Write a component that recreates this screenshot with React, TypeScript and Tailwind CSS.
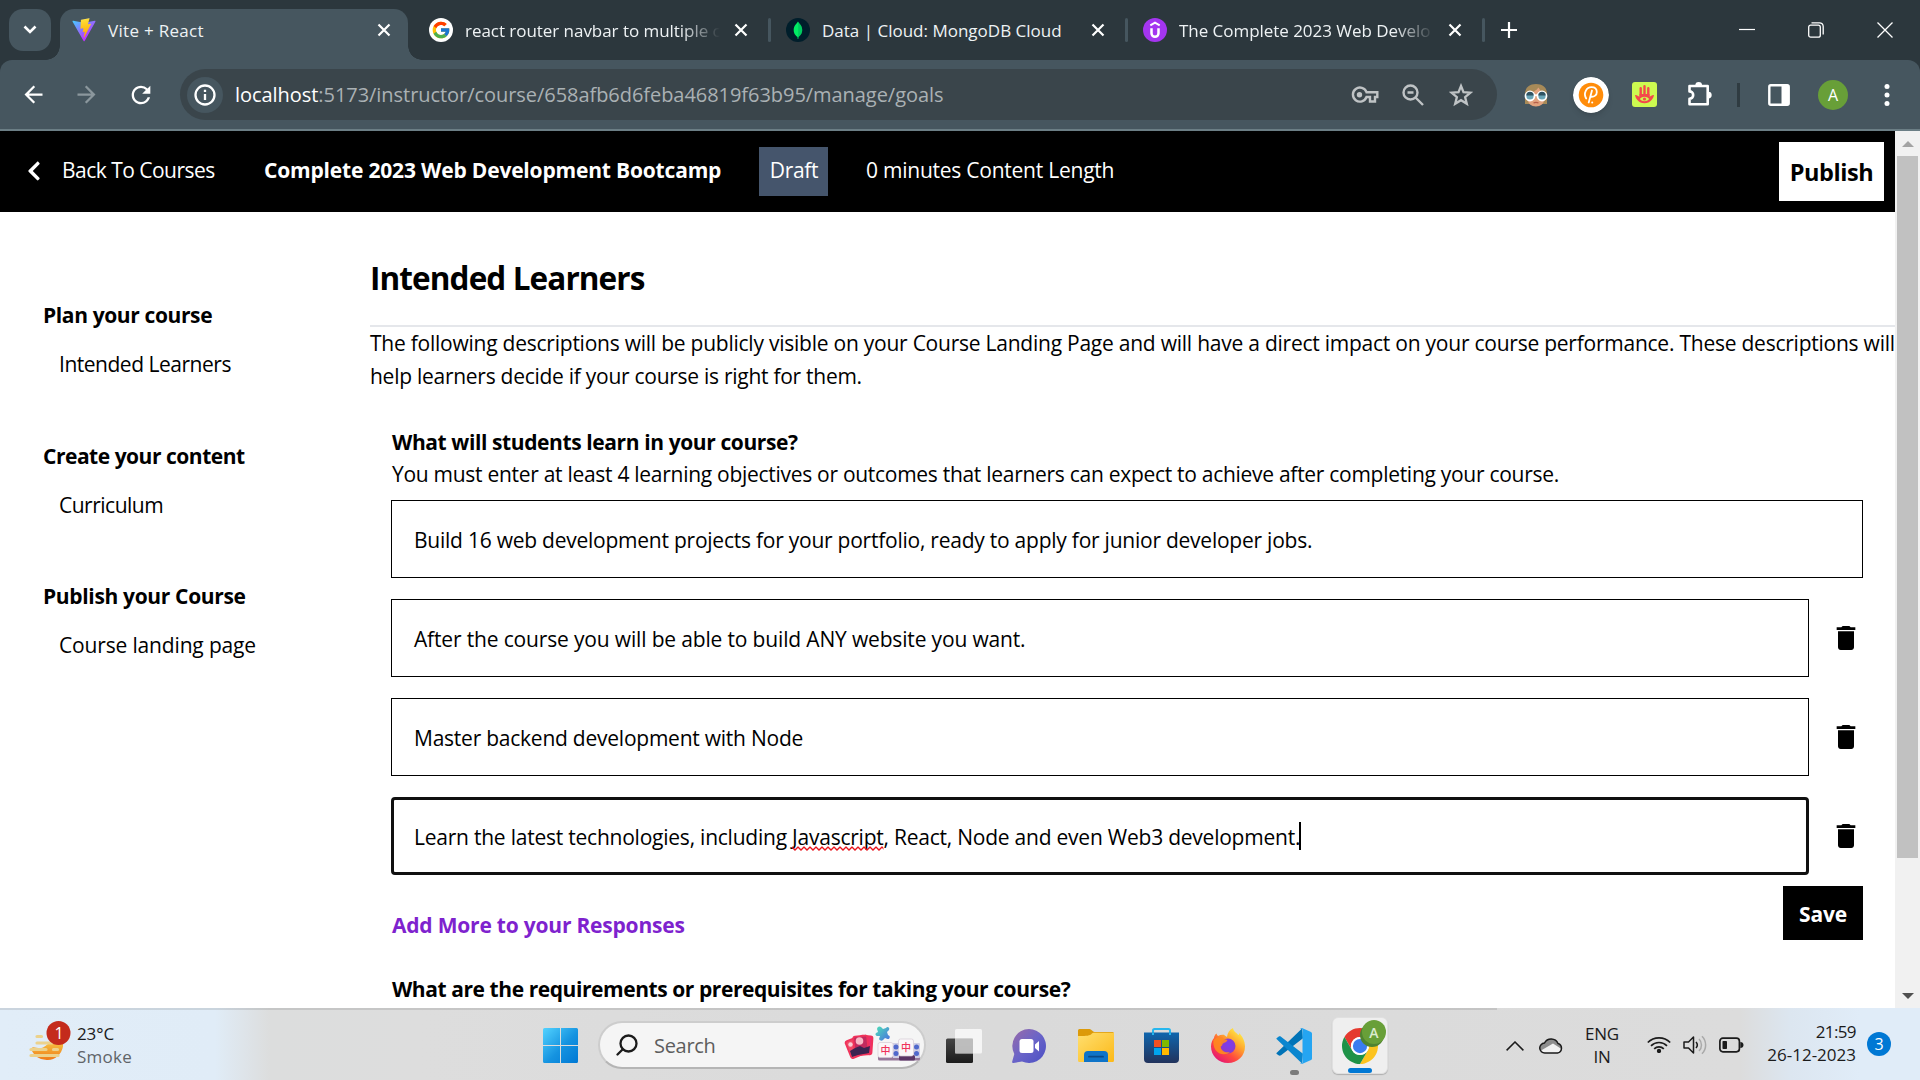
import type { ReactNode } from "react";
import { FaChevronLeft } from "react-icons/fa";
import { FcGoogle } from "react-icons/fc";
import { MdArrowBack, MdArrowForward, MdDelete, MdRefresh } from "react-icons/md";

/* ---------- favicons ---------- */

function ViteIcon() {
  return (
    <svg viewBox="0 0 410 404" className="h-6 w-6 shrink-0">
      <defs>
        <linearGradient id="viteA" x1="6" y1="33" x2="235" y2="344" gradientUnits="userSpaceOnUse">
          <stop stopColor="#41D1FF" />
          <stop offset="1" stopColor="#BD34FE" />
        </linearGradient>
        <linearGradient id="viteB" x1="194" y1="9" x2="236" y2="293" gradientUnits="userSpaceOnUse">
          <stop stopColor="#FFEA83" />
          <stop offset="0.08" stopColor="#FFDD35" />
          <stop offset="1" stopColor="#FFA800" />
        </linearGradient>
      </defs>
      <path fill="url(#viteA)" d="M399.641 59.5246L215.643 388.545C211.844 395.338 202.084 395.378 198.228 388.618L10.5817 59.5563C6.38087 52.1896 12.6802 43.2665 21.0281 44.7586L205.223 77.6824C206.398 77.8924 207.601 77.8904 208.776 77.6763L389.119 44.8058C397.439 43.2894 403.768 52.1434 399.641 59.5246Z" />
      <path fill="url(#viteB)" d="M292.965 1.5744L156.801 28.2552C154.563 28.6937 152.906 30.5903 152.771 32.8664L144.395 174.33C144.198 177.662 147.258 180.248 150.51 179.498L188.42 170.749C191.967 169.931 195.172 173.055 194.443 176.622L183.18 231.775C182.422 235.487 185.907 238.661 189.532 237.56L212.947 230.446C216.577 229.344 220.065 232.527 219.297 236.242L201.398 322.875C200.278 328.294 207.486 331.249 210.492 326.603L212.5 323.5L323.454 102.072C325.312 98.3645 322.108 94.137 318.036 94.9228L279.014 102.454C275.347 103.161 272.227 99.746 273.262 96.1583L298.731 7.86689C299.767 4.27314 296.636 0.855181 292.965 1.5744Z" />
    </svg>
  );
}

function GoogleIcon() {
  return (
    <span className="flex h-6 w-6 shrink-0 items-center justify-center rounded-full bg-white">
      <FcGoogle className="h-5 w-5" />
    </span>
  );
}

function MongoIcon() {
  return (
    <svg viewBox="0 0 24 24" className="h-6 w-6 shrink-0">
      <circle cx="12" cy="12" r="12" fill="#001e2b" />
      <path fill="#00ed64" d="M12 3.5C13 5.5 16.2 7.5 16.2 12c0 4-2.4 5.8-3.7 6.9L12.2 21h-.5l-.2-2.1C10 17.800 7.700 16 7.700 12 7.700 7.500 11 5.500 12 3.500Z" />
      <path fill="#00a35c" d="M12.200 4v17h.300l.200-2.200c1.200-1.100 3.500-2.800 3.500-6.800 0-4.400-3-6.300-4-8Z" opacity=".45" />
    </svg>
  );
}

function UdemyIcon() {
  return (
    <svg viewBox="0 0 24 24" className="h-6 w-6 shrink-0">
      <circle cx="12" cy="12" r="12" fill="#a435f0" />
      <path d="M7.300 7.300 12 4.700l4.700 2.600" fill="none" stroke="#fff" strokeWidth="2.100" />
      <path d="M8.500 10.300v5a3.500 3.500 0 0 0 7 0v-5" fill="none" stroke="#fff" strokeWidth="2.500" />
    </svg>
  );
}

/* ---------- browser chrome ---------- */

function CloseMark() {
  return (
    <svg viewBox="0 0 14 14" className="h-3.5 w-3.5 shrink-0" stroke="#fff" strokeWidth="2.200">
      <path d="M1.500 1.500l11 11M12.500 1.500l-11 11" />
    </svg>
  );
}

function BackgroundTab({ icon, title, faded }: { icon: ReactNode; title: string; faded?: boolean }) {
  return (
    <div className="flex h-full w-[357px] items-center pl-[15px]">
      {icon}
      <span
        className={
          faded
            ? "ml-3 w-[255px] whitespace-nowrap pt-[2px] tracking-[-0.040px] [mask-image:linear-gradient(to_right,#000_215px,transparent_255px)]"
            : "ml-3 w-[255px] whitespace-nowrap pt-[2px]"
        }
      >
        {title}
      </span>
      <span className="ml-[14px] flex">
        <CloseMark />
      </span>
      <span className="ml-[20px] h-6 w-[3px] rounded-full bg-[#46565f]" />
    </div>
  );
}

function TabStrip() {
  return (
    <div className="flex h-[60px] items-start bg-[#2c373d] text-[17px] text-[#eef2f4]">
      <button className="ml-[9px] mt-[9px] flex h-[42px] w-[42px] items-center justify-center rounded-[14px] bg-[#46565f]">
        <svg viewBox="0 0 14 10" className="h-2.5 w-3.5" fill="none" stroke="#fff" strokeWidth="2.600">
          <path d="M1.500 1.500 7 7l5.500-5.500" />
        </svg>
      </button>
      <div className="relative ml-[9px] mt-[9px] flex h-[51px] w-[348px] items-start rounded-t-[14px] bg-[#46565f] pl-3">
        <span className="absolute -left-[14px] bottom-0 h-[14px] w-[14px] bg-[radial-gradient(circle_at_0_0,transparent_13.500px,#46565f_14px)]" />
        <span className="absolute -right-[14px] bottom-0 h-[14px] w-[14px] bg-[radial-gradient(circle_at_100%_0,transparent_13.500px,#46565f_14px)]" />
        <div className="flex h-[42px] items-center">
          <ViteIcon />
          <span className="ml-3 w-[255px] pt-[2px] tracking-[0.300px]">Vite + React</span>
          <span className="ml-[14px] flex">
            <CloseMark />
          </span>
        </div>
      </div>
      <div className="ml-[6px] mt-[9px] flex h-[42px]">
        <BackgroundTab icon={<GoogleIcon />} title="react router navbar to multiple c" faded />
        <BackgroundTab icon={<MongoIcon />} title="Data | Cloud: MongoDB Cloud" />
        <BackgroundTab icon={<UdemyIcon />} title="The Complete 2023 Web Develo" faded />
      </div>
      <svg viewBox="0 0 16 16" className="ml-[16px] mt-[22px] h-4 w-4" stroke="#fff" strokeWidth="2.200">
        <path d="M8 0v16M0 8h16" />
      </svg>
      <div className="ml-auto mt-[22px] flex items-center pr-[27px]">
        <svg viewBox="0 0 16 16" className="h-4 w-4" stroke="#fff" strokeWidth="1.200">
          <path d="M0 7.500h16" />
        </svg>
        <svg viewBox="0 0 16 16" className="ml-[53px] h-4 w-4" fill="none" stroke="#fff" strokeWidth="1.300">
          <rect x=".700" y="3.200" width="11.600" height="12" rx="2" />
          <path d="M3.500.8h8a3.600 3.600 0 0 1 3.700 3.600v8.200" />
        </svg>
        <svg viewBox="0 0 16 16" className="ml-[53px] h-4 w-4" stroke="#fff" strokeWidth="1.300">
          <path d="M.5.500l15 15M15.500.5l-15 15" />
        </svg>
      </div>
    </div>
  );
}

function KeyIcon() {
  return (
    <svg viewBox="0 0 28 18" className="h-[18px] w-7" fill="none" stroke="currentColor" strokeWidth="2.400">
      <path d="M15.500 6.200H26.300V11H24v4.500h-5V11h-3.500A7 7 0 1 1 15.500 6.200Z" strokeLinejoin="miter" />
      <circle cx="8.500" cy="8.800" r="2.700" fill="currentColor" stroke="none" />
    </svg>
  );
}

function ZoomOutIcon() {
  return (
    <svg viewBox="0 0 22 22" className="h-[22px] w-[22px]" fill="none" stroke="currentColor" strokeWidth="2.400">
      <circle cx="8.500" cy="8.500" r="7" />
      <path d="M13.500 13.500l7.500 7.500M5.500 8.500h6" />
    </svg>
  );
}

function StarIcon() {
  return (
    <svg viewBox="0 0 24 24" className="h-6 w-6" fill="none" stroke="currentColor" strokeWidth="2.300">
      <path d="M12 3l2.500 6.200 6.900.500-5.300 4.400 1.700 6.700-5.800-3.600-5.800 3.600 1.700-6.700-5.300-4.400 6.900-.5z" />
    </svg>
  );
}

function FaceExtension() {
  return (
    <svg viewBox="0 0 24 24" className="h-6 w-6">
      <path d="M1 21V10C1.500 4 6 1 12 1s10.500 3 11 9v11h-4l-14 0z" fill="#a78a58" />
      <path d="M3.500 11C8 10 12.500 7.500 14.500 4.500c1.500 3 3.500 5 6 6v5c0 5-4 8-8.500 8s-8.500-3-8.500-8z" fill="#e2a27e" />
      <circle cx="6" cy="13" r="4.500" fill="#6ba6b8" stroke="#fff" strokeWidth="1.800" />
      <circle cx="18" cy="13" r="4.500" fill="#6ba6b8" stroke="#fff" strokeWidth="1.800" />
      <path d="M2.300 12.500a3.700 3.700 0 0 1 7.400 0zM14.300 12.500a3.700 3.700 0 0 1 7.400 0z" fill="#2f5363" />
      <path d="M10 12.200h4" stroke="#fff" strokeWidth="1.800" />
      <path d="M9.500 20c1.500-.8 3.500-.8 5 0" stroke="#b55f4a" fill="none" strokeWidth="1.200" />
    </svg>
  );
}

function PinExtension() {
  return (
    <svg viewBox="0 0 36 36" className="h-9 w-9 rounded-full shadow-md">
      <circle cx="18" cy="18" r="18" fill="#fff" />
      <circle cx="18" cy="18" r="12.300" fill="#ff8c0a" />
      <path d="M13.200 21.500c-3.200-5.500.3-11.300 5.300-11.300 3.300 0 5.300 2 5.300 4.700 0 3.200-2.500 5.200-5.800 4.800M19 13.500l-3.300 12" fill="none" stroke="#fff" strokeWidth="1.800" strokeLinecap="round" />
      <circle cx="19.200" cy="25.500" r="1" fill="#fff" />
    </svg>
  );
}

function HandExtension() {
  return (
    <svg viewBox="0 0 25 25" className="h-[25px] w-[25px]">
      <rect width="25" height="25" rx="3" fill="#cdfa50" />
      <path d="M8.700 14V6.300M12.500 14V4.300M16.300 14V6.300" stroke="#f4494b" strokeWidth="2.400" strokeLinecap="round" />
      <path d="M3 13c2.300-.2 3 1.200 4.500 1.700V12h10v2.700c1.500-.5 2.200-1.900 4.500-1.700-.5 3.300-3.500 8.200-9.500 8.200S3.500 16.300 3 13Z" fill="#f4494b" />
      <path d="M7.800 17c2.600-2.900 6.800-2.900 9.400 0-2.600 2.900-6.800 2.900-9.400 0Z" fill="#cdfa50" />
      <circle cx="12.500" cy="17" r="1.600" fill="#f4494b" />
    </svg>
  );
}

function PuzzleIcon() {
  return (
    <svg viewBox="0 0 30 30" className="h-[30px] w-[30px]">
      <path d="M5.500 7h18.200v18.200H5.500v-5.400a3.700 3.700 0 0 0 0-7.400z" fill="none" stroke="#fff" strokeWidth="2.600" strokeLinejoin="round" />
      <path d="M11.300 6.500a3.400 3.400 0 0 1 6.800 0zM24.300 12.700a3.400 3.400 0 0 1 0 6.800z" fill="#fff" />
    </svg>
  );
}

function Toolbar() {
  return (
    <div className="bg-[#2c373d]">
      <div className="flex h-[71px] items-center rounded-t-[12px] border-b-2 border-[#6b7e85] bg-[#46565f] text-white">
        <MdArrowBack className="ml-5 h-[27px] w-[27px]" />
        <MdArrowForward className="ml-[26px] h-[27px] w-[27px] text-[#8b979d]" />
        <MdRefresh className="ml-[27px] h-[28px] w-[28px]" />
        <div className="ml-[25px] flex h-[51px] w-[1317px] items-center rounded-full bg-[#3a454b] pl-[7px]">
          <span className="flex h-9 w-9 items-center justify-center rounded-full bg-[#46565f]">
            <svg viewBox="0 0 22 22" className="h-[22px] w-[22px]">
              <circle cx="11" cy="11" r="9.500" fill="none" stroke="#fff" strokeWidth="2.300" />
              <path d="M11 10v6M11 5.800v2.200" stroke="#fff" strokeWidth="2.300" />
            </svg>
          </span>
          <span className="ml-3 whitespace-nowrap text-[20px] tracking-[-0.050px] text-[#aab1b4]">
            <span className="text-white">localhost</span>:5173/instructor/course/658afb6d6feba46819f63b95/manage/goals
          </span>
          <div className="ml-auto flex items-center pr-6 text-[#bfc3c5]">
            <KeyIcon />
            <span className="ml-[23px]"><ZoomOutIcon /></span>
            <span className="ml-[25px]"><StarIcon /></span>
          </div>
        </div>
        <div className="flex flex-1 items-center">
          <span className="ml-[27px]"><FaceExtension /></span>
          <span className="ml-[25px]"><PinExtension /></span>
          <span className="ml-[23px]"><HandExtension /></span>
          <span className="-mt-[2px] ml-[27px]"><PuzzleIcon /></span>
          <span className="ml-[23px] h-[24px] w-[3px] bg-[#2f3b41]" />
          <svg viewBox="0 0 22 22" className="ml-[28px] h-[22px] w-[22px]">
            <rect x="1.300" y="1.300" width="19.400" height="19.400" rx="1.500" fill="none" stroke="#fff" strokeWidth="2.400" />
            <path d="M13.500 1h7.500v20h-7.500z" fill="#fff" />
          </svg>
          <span className="ml-[28px] flex h-[30px] w-[30px] items-center justify-center rounded-full bg-[#689f38] text-[16px]">A</span>
          <svg viewBox="0 0 6 24" className="ml-[36px] h-6 w-1.5" fill="#fff">
            <circle cx="3" cy="3.500" r="2.500" />
            <circle cx="3" cy="12" r="2.500" />
            <circle cx="3" cy="20.500" r="2.500" />
          </svg>
        </div>
      </div>
    </div>
  );
}

/* ---------- course page ---------- */

function CourseHeader() {
  return (
    <header className="flex h-[81px] items-center bg-black pb-px text-white">
      <FaChevronLeft className="ml-[25px] h-[22px] w-[18px]" />
      <span className="ml-[19px] w-[202px] whitespace-nowrap tracking-[-0.520px]">Back To Courses</span>
      <span className="w-[495px] whitespace-nowrap font-bold tracking-[-0.180px]">Complete 2023 Web Development Bootcamp</span>
      <span className="flex h-[49px] w-[69px] items-center justify-center bg-slate-600 pl-px tracking-[-0.300px]">Draft</span>
      <span className="ml-[38px] whitespace-nowrap tracking-[-0.240px]">0 minutes Content Length</span>
      <button className="ml-auto mr-[11px] mt-px flex h-[59px] w-[105px] items-center justify-center bg-white pt-[2px] text-[23.500px] font-bold tracking-[-0.400px] text-black">
        Publish
      </button>
    </header>
  );
}

function Sidebar() {
  return (
    <aside className="w-[370px] shrink-0 whitespace-nowrap pl-[43px] pt-[87px] leading-[33px]">
      <section className="h-[140.500px]">
        <h2 className="font-bold tracking-[-0.380px]">Plan your course</h2>
        <p className="mt-4 pl-4 tracking-[-0.480px]">Intended Learners</p>
      </section>
      <section className="h-[140.500px]">
        <h2 className="font-bold tracking-[-0.480px]">Create your content</h2>
        <p className="mt-4 pl-4 tracking-[-0.500px]">Curriculum</p>
      </section>
      <section className="h-[140.500px]">
        <h2 className="font-bold tracking-[-0.340px]">Publish your Course</h2>
        <p className="mt-4 pl-4 tracking-[-0.160px]">Course landing page</p>
      </section>
    </aside>
  );
}

function Answer({ children }: { children: ReactNode }) {
  return (
    <div className="mt-[21px] flex h-[78px] items-center">
      <div className="flex h-[78px] w-[1418px] items-center whitespace-nowrap border border-black pl-[22px] pt-[3px]">{children}</div>
      <MdDelete className="ml-[21px] h-8 w-8" />
    </div>
  );
}

function Misspelled({ children }: { children: ReactNode }) {
  return (
    <span className="relative">
      {children}
      <svg className="absolute left-0 top-[23px] h-[5px] w-full" aria-hidden="true">
        <defs>
          <pattern id="squiggle" width="6" height="5" patternUnits="userSpaceOnUse">
            <path d="M-1 .2 0 1l3 3 3-3 1-.8" fill="none" stroke="#e8141c" strokeWidth="1.300" />
          </pattern>
        </defs>
        <rect width="100%" height="5" fill="url(#squiggle)" />
      </svg>
    </span>
  );
}

function Goals() {
  return (
    <main className="min-w-0 flex-1 pt-[44px]">
      <h1 className="whitespace-nowrap text-[31.500px] font-bold leading-[44px] tracking-[-0.900px]">Intended Learners</h1>
      <div className="mt-[25px] whitespace-nowrap border-t-2 border-gray-200 leading-[33px]">
        <p className="tracking-[-0.238px]">
          The following descriptions will be publicly visible on your Course Landing Page and will have a direct impact on your course performance. These descriptions will
        </p>
        <p className="tracking-[-0.270px]">help learners decide if your course is right for them.</p>
      </div>
      <div className="ml-[21px] mt-[32px] w-[1472px]">
        <h2 className="pl-px pt-px font-bold leading-[32px] tracking-[-0.400px]">What will students learn in your course?</h2>
        <p className="pl-px leading-[33px] tracking-[-0.285px]">
          You must enter at least 4 learning objectives or outcomes that learners can expect to achieve after completing your course.
        </p>
        <div className="mt-[9px] flex h-[78px] items-center whitespace-nowrap border border-black pl-[22px] pt-[3px] tracking-[-0.240px]">
          Build 16 web development projects for your portfolio, ready to apply for junior developer jobs.
        </div>
        <Answer>
          <span className="tracking-[-0.160px]">After the course you will be able to build ANY website you want.</span>
        </Answer>
        <Answer>
          <span className="tracking-[-0.240px]">Master backend development with Node</span>
        </Answer>
        <div className="mt-[21px] flex h-[78px] items-center">
          <div className="flex h-[78px] w-[1418px] items-center whitespace-nowrap rounded-[4px] border-[3px] border-[#101010] pl-[20px] pt-[3px]">
            <span className="tracking-[-0.230px]">
              Learn the latest technologies, including <Misspelled>Javascript</Misspelled>, React, Node and even Web3 development.
            </span>
            <span className="-ml-px -mt-[3px] h-[28px] w-[2px] bg-black" />
          </div>
          <MdDelete className="ml-[21px] h-8 w-8" />
        </div>
        <div className="mt-[11px] flex h-[86px] items-start justify-between">
          <button className="mt-[23px] pl-px font-bold leading-[33px] tracking-[-0.210px] text-[#7e22ce]">Add More to your Responses</button>
          <button className="flex h-[54px] w-[80px] items-center justify-center bg-black pt-[3px] font-bold tracking-[-0.150px] text-white">Save</button>
        </div>
        <h2 className="whitespace-nowrap pl-px pt-px font-bold leading-[33px] tracking-[-0.430px]">What are the requirements or prerequisites for taking your course?</h2>
      </div>
    </main>
  );
}

function Scrollbar() {
  return (
    <div className="flex w-[25px] flex-col items-center bg-[#f1f1f1]">
      <svg viewBox="0 0 12 6" className="mt-[10px] h-1.5 w-3" fill="#a3a3a3">
        <path d="M0 6 6 0l6 6z" />
      </svg>
      <div className="mt-[9px] h-[702px] w-[21px] bg-[#c1c1c1]" />
      <svg viewBox="0 0 12 6" className="mb-[9px] mt-auto h-1.5 w-3" fill="#505050">
        <path d="M0 0 6 6l6-6z" />
      </svg>
    </div>
  );
}

/* ---------- taskbar ---------- */

function WeatherIcon() {
  return (
    <svg viewBox="0 0 46 44" className="h-11 w-[46px]">
      <defs>
        <linearGradient id="sun" x1="0" y1="0" x2="0" y2="1">
          <stop stopColor="#f6c343" />
          <stop offset="1" stopColor="#f07a17" />
        </linearGradient>
      </defs>
      <path d="M2 27.500C5 24 9 29 14 26.500c4-2 6-7 20-5v4a16.500 16.500 0 0 1-32 2Z" fill="url(#sun)" />
      <path d="M8 15.500h4.500M8 22h15M2 28.500h15M24.500 28.500h4M2 34.500h27" stroke="#ecd28c" strokeWidth="3.200" strokeLinecap="round" />
      <circle cx="29.500" cy="12" r="12" fill="#c42b1c" />
      <text x="30" y="17.500" textAnchor="middle" fontSize="16" fill="#fff">1</text>
    </svg>
  );
}

function StartIcon() {
  return (
    <svg viewBox="0 0 35 35" className="h-[35px] w-[35px]">
      <defs>
        <linearGradient id="win" x1="0" y1="0" x2="35" y2="35" gradientUnits="userSpaceOnUse">
          <stop stopColor="#53d3ff" />
          <stop offset=".55" stopColor="#1593e0" />
          <stop offset="1" stopColor="#0078d4" />
        </linearGradient>
      </defs>
      <path fill="url(#win)" d="M1.500 0H17v17H0V1.500A1.500 1.500 0 0 1 1.500 0ZM18 0h15.500A1.500 1.500 0 0 1 35 1.500V17H18zM0 18h17v17H1.500A1.500 1.500 0 0 1 0 33.500zM18 18h17v15.500a1.500 1.500 0 0 1-1.500 1.500H18z" />
    </svg>
  );
}

function MahjongFace({ x, y }: { x: number; y: number }) {
  return (
    <text x={x} y={y} fill="#f0325a" fontSize="10" fontWeight="500" textAnchor="middle" className="font-['Noto_Sans_CJK_SC',sans-serif]">
      中
    </text>
  );
}

function SearchArt() {
  return (
    <svg viewBox="0 0 78 38" className="h-[38px] w-[78px]">
      <defs>
        <linearGradient id="piece" x1="0" y1="0" x2="1" y2="1">
          <stop stopColor="#4fe0b8" />
          <stop offset="1" stopColor="#4a6fe0" />
        </linearGradient>
      </defs>
      <g stroke="#f0325a" strokeWidth="1.800">
        <rect x="4" y="15" width="13" height="18" rx="2" fill="#f04a66" transform="rotate(-22 10 24)" />
        <rect x="16" y="12" width="12" height="18" rx="2" fill="#ef2e6b" transform="rotate(4 22 21)" />
        <rect x="10" y="12" width="14" height="19" rx="2" fill="#c22a5e" transform="rotate(-6 17 21)" />
      </g>
      <path d="M6 27l5-3 5-2 4 2 6-2-1 7-11 2-6 2z" fill="#3b2350" />
      <circle cx="15.500" cy="17" r="3.800" fill="#f7b9c6" />
      <circle cx="6.500" cy="20.500" r="2.200" fill="#f9cdd4" />
      <path d="M33 5a2.500 2.500 0 0 1 4-2l2 2 3-1 1-1a2 2 0 0 1 2 3l-2 2 1 3 1.500 1a2 2 0 0 1-2 3L41 14l-2 2a2.500 2.500 0 0 1-4-1l1-3-3 0a2 2 0 0 1-1-3l2-1z" fill="url(#piece)" />
      <rect x="34" y="32" width="42" height="4.500" rx="1.500" fill="#96789a" />
      <rect x="34" y="18.500" width="15" height="15" rx="2" fill="#faf6f8" stroke="#d6ccd6" strokeWidth=".7" />
      <rect x="49" y="19" width="7" height="15" fill="#cfcde4" />
      <rect x="69" y="19" width="7" height="15" rx="1" fill="#cfcde4" />
      <rect x="55" y="31" width="16" height="5.500" rx="1.500" fill="#5a3566" />
      <rect x="54.500" y="15" width="15" height="17" rx="2" fill="#fbf7f9" stroke="#d6ccd6" strokeWidth=".7" />
      <g fill="#5068cc">
        <circle cx="52" cy="23" r="2.500" />
        <circle cx="52" cy="29.500" r="2.500" />
        <circle cx="72.500" cy="23" r="2.500" />
        <circle cx="72.500" cy="29.500" r="2.500" />
      </g>
      <MahjongFace x={41.5} y={29.8} />
      <MahjongFace x={62} y={27.300} />
    </svg>
  );
}

function TaskViewIcon() {
  return (
    <svg viewBox="0 0 36 34" className="h-[34px] w-9">
      <defs>
        <linearGradient id="tv" x1="0" y1="0" x2="0" y2="1">
          <stop stopColor="#454545" />
          <stop offset="1" stopColor="#1c1c1c" />
        </linearGradient>
      </defs>
      <rect x="0" y="9.500" width="27" height="24.500" rx="1.500" fill="url(#tv)" />
      <rect x="9" y="0" width="27" height="24.500" rx="1.500" fill="#fff" fillOpacity=".72" />
      <path d="M9 9.500h18v15H9z" fill="#b8b8b8" fillOpacity=".7" />
    </svg>
  );
}

function ChatIcon() {
  return (
    <svg viewBox="0 0 34 34" className="h-[34px] w-[34px]">
      <defs>
        <linearGradient id="chat" x1="0" y1="0" x2="1" y2="1">
          <stop stopColor="#9a6aa8" />
          <stop offset=".5" stopColor="#6a64c8" />
          <stop offset="1" stopColor="#4a4fc4" />
        </linearGradient>
      </defs>
      <path d="M17 0a17 17 0 1 1-7 32.500L1.500 34c-.9.200-1.600-.5-1.300-1.400L2.300 25A17 17 0 0 1 17 0Z" fill="url(#chat)" />
      <rect x="7.500" y="10" width="14" height="14" rx="2.500" fill="#fff" />
      <path d="M23 15.500l4-3.500v10.500L23 19z" fill="#fff" />
    </svg>
  );
}

function FolderIcon() {
  return (
    <svg viewBox="0 0 36 33" className="h-[33px] w-9">
      <defs>
        <linearGradient id="fold" x1="0" y1="0" x2="1" y2="1">
          <stop stopColor="#ffdf70" />
          <stop offset="1" stopColor="#fcb918" />
        </linearGradient>
      </defs>
      <path d="M0 1.500A1.500 1.500 0 0 1 1.500 0h10c2 0 3 3 5 3H34.500A1.500 1.500 0 0 1 36 4.500V8H0z" fill="#dc9a0a" />
      <path d="M0 7c6 0 11 0 13-1.500C14.500 4 15 3.800 17 3.800H36V31.500A1.500 1.500 0 0 1 34.500 33h-33A1.500 1.500 0 0 1 0 31.500z" fill="url(#fold)" />
      <path d="M6 33v-7a4 4 0 0 1 4-4h16a4 4 0 0 1 4 4v7z" fill="#0f74c8" />
      <path d="M11 27.700h14" stroke="#0a4a88" strokeWidth="1.800" strokeLinecap="round" />
    </svg>
  );
}

function StoreIcon() {
  return (
    <svg viewBox="0 0 35 35" className="h-[35px] w-[35px]">
      <defs>
        <linearGradient id="store" x1="0" y1="0" x2="0" y2="1">
          <stop stopColor="#0f66ae" />
          <stop offset="1" stopColor="#22335c" />
        </linearGradient>
      </defs>
      <path d="M9 7V2.500A1.500 1.500 0 0 1 10.500 1h14A1.500 1.500 0 0 1 26 2.500V7" fill="none" stroke="#27b7ee" strokeWidth="2" />
      <path d="M0 4.500h35V31a4 4 0 0 1-4 4H4a4 4 0 0 1-4-4z" fill="url(#store)" />
      <path d="M9 4.500V7M26 4.500V7" stroke="#27b7ee" strokeWidth="2" />
      <path d="M10 12h7v7h-7z" fill="#f25022" />
      <path d="M18 12h7v7h-7z" fill="#7fba00" />
      <path d="M10 20h7v7h-7z" fill="#00a4ef" />
      <path d="M18 20h7v7h-7z" fill="#ffb900" />
    </svg>
  );
}

function FirefoxIcon() {
  return (
    <svg viewBox="0 0 34 35" className="h-[35px] w-[34px]">
      <defs>
        <linearGradient id="fxBody" x1=".9" y1=".1" x2=".2" y2="1">
          <stop stopColor="#fff14a" />
          <stop offset=".35" stopColor="#ffa32c" />
          <stop offset=".65" stopColor="#ff4a3e" />
          <stop offset="1" stopColor="#e2107c" />
        </linearGradient>
        <radialGradient id="fxCore" cx=".55" cy=".4">
          <stop stopColor="#7a3df0" />
          <stop offset="1" stopColor="#8a3bd0" />
        </radialGradient>
      </defs>
      <path d="M5.500 5.500c.3 1.200 1 2 1.500 2.500 2-1.200 4-1.500 6-1.200C14 8 15 8.500 16 9c.5-4 2.500-7.500 6-9 .5 3.500 3 4.500 5.500 7 .7-.2.500-1 .5-2 3.500 3.500 6 8 6 13.500C34 28 26.500 35 17 35S0 27.500 0 18.500C0 14.500 1.500 12 3 10c.3-2 1-3.500 2.500-4.500Z" fill="url(#fxBody)" />
      <circle cx="17" cy="18" r="7.500" fill="url(#fxCore)" />
      <path d="M2.500 12c3-3 7-3.500 9-2.500 1 1.500 3 2 5 2.500-.5 2-3 2.500-4.500 3.500-1 1-.5 2.500-2.500 3 .5 4.500 5 6.500 9.500 5.500-4 3.500-11 3-14.500-2C2.500 18.500 2 15 2.500 12Z" fill="#ff8a1f" opacity=".9" />
    </svg>
  );
}

function VsCodeIcon() {
  return (
    <svg viewBox="0 0 36 36" className="h-9 w-9">
      <path d="M.8 24.800 26 .5l1 9.800L5 27.300c-.8.600-1.800.6-2.500 0L.8 26c-.5-.4-.5-.9 0-1.200Z" fill="#0073b7" />
      <path d="M.8 11.200 26 35.500l1-9.800L5 8.700c-.8-.6-1.800-.6-2.500 0L.8 10c-.5.400-.5.900 0 1.200Z" fill="#0a86cf" />
      <path d="M26 0l9 4c.6.300 1 .9 1 1.600v24.800c0 .7-.4 1.300-1 1.600l-9 4c-1 .4-1.700-.3-2-.6 1.200.6 2.500-.3 2.500-1.500V2.100C26.500.9 25.200 0 24 .6c.3-.3 1-1 2-.6Z" fill="#25a5f2" />
    </svg>
  );
}

function ChromeIcon() {
  const wedge = "M24 12H44.780A24 24 0 0 0 3.220 12L13.600 30A12 12 0 0 1 24 12Z";
  return (
    <svg viewBox="0 0 48 48" className="h-9 w-9">
      <path d={wedge} fill="#e53a2f" />
      <path d={wedge} fill="#fcc31e" transform="rotate(120 24 24)" />
      <path d={wedge} fill="#1e9247" transform="rotate(240 24 24)" />
      <circle cx="24" cy="24" r="12" fill="#fff" />
      <circle cx="24" cy="24" r="9.500" fill="#3a7df0" />
    </svg>
  );
}

function Taskbar() {
  return (
    <footer className="relative flex h-[72px] items-center bg-[linear-gradient(to_right,#e1edf8_0px,#e0ecf7_215px,#dcdddd_270px,#dddddd_420px,#dadada_1000px,#dcdcdc_1740px,#dce6f0_1790px,#e0ecf8_1860px)] pt-[3px] text-[17px] leading-[23px] text-[#1b1b1b]">
      <span className="absolute left-0 top-0 h-[2px] w-[1497px] bg-black/10" />
      <div className="flex w-[543px] items-center pl-[29px]">
        <div className="-mt-[6px]"><WeatherIcon /></div>
        <div className="-mt-[2px] ml-[2px]">
          <p className="tracking-[-0.100px]">23°C</p>
          <p className="tracking-[0.250px] text-[#5f6468]">Smoke</p>
        </div>
      </div>
      <StartIcon />
      <div className="-mt-px ml-[20px] flex h-[48px] w-[328px] items-center rounded-full border-2 border-[#cdcdcd] border-b-[#b5b5b5] bg-[#f5f5f5] pl-4">
        <svg viewBox="0 0 22 22" className="h-[22px] w-[22px]" fill="none" stroke="#1b1b1b" strokeWidth="2.300" strokeLinecap="round">
          <circle cx="12.500" cy="9.500" r="8" />
          <path d="M6.800 15.200 1.500 20.500" />
        </svg>
        <span className="ml-4 w-[190px] pt-px text-[20px] tracking-[-0.300px] text-[#5d5d5d]">Search</span>
        <span className="-mt-[4px] shrink-0"><SearchArt /></span>
      </div>
      <span className="ml-5"><TaskViewIcon /></span>
      <span className="ml-[30px]"><ChatIcon /></span>
      <span className="ml-8"><FolderIcon /></span>
      <span className="ml-[30px]"><StoreIcon /></span>
      <span className="ml-8"><FirefoxIcon /></span>
      <span className="relative ml-[31px]">
        <VsCodeIcon />
        <span className="absolute -bottom-[11px] left-[13.500px] h-[5px] w-[9px] rounded-full bg-[#7b7b7b]" />
      </span>
      <span className="relative ml-5 flex h-[57px] w-14 items-center justify-center rounded-md border border-[#e0e0e0] bg-[#efefef] shadow-[0_1px_1px_#0003]">
        <ChromeIcon />
        <span className="absolute left-[27px] top-[5px] h-6 w-6 rounded-full bg-[#4f8330]" />
        <span className="absolute left-[29px] top-[2px] flex h-6 w-6 items-center justify-center rounded-full bg-[#689f38] text-[14px] font-semibold text-[#dcebcf]">A</span>
        <span className="absolute bottom-0 left-[15px] h-[5px] w-6 rounded-full bg-[#0078d4]" />
      </span>
      <svg viewBox="0 0 18 10" className="ml-[118px] h-2.5 w-[18px] shrink-0" fill="none" stroke="#1b1b1b" strokeWidth="1.500">
        <path d="M.6 9.400 9 1l8.400 8.400" />
      </svg>
      <svg viewBox="0 0 24 17" className="ml-[15px] h-[17px] w-6 shrink-0">
        <path d="M6 16a5 5 0 0 1-.5-10A7.500 7.500 0 0 1 19 6.500 4.900 4.900 0 0 1 18.500 16Z" fill="#8d8d8d" />
        <path d="M2 13.500 14 6.500l8.500 5.500c0 2-2 4-4 4H6c-2 0-3.500-1-4-2.500Z" fill="#f1f1f1" />
        <path d="M6 16a5 5 0 0 1-.5-10A7.500 7.500 0 0 1 19 6.500 4.900 4.900 0 0 1 18.500 16Z" fill="none" stroke="#1b1b1b" strokeWidth="1.500" />
      </svg>
      <div className="-mt-px ml-[21px] w-[36px] whitespace-nowrap text-center tracking-[-0.200px]">
        <p>ENG</p>
        <p>IN</p>
      </div>
      <svg viewBox="0 0 24 17" className="-mt-[2px] ml-[27px] h-[17px] w-6 shrink-0" fill="none" stroke="#1b1b1b" strokeWidth="1.700">
        <path d="M.8 6.500a15.800 15.800 0 0 1 22.400 0M4 9.800a11.300 11.300 0 0 1 16 0M7.200 12.800a6.800 6.800 0 0 1 9.600 0" />
        <circle cx="12" cy="15" r="1.300" fill="#1b1b1b" />
      </svg>
      <svg viewBox="0 0 24 20" className="-mt-[2px] ml-3 h-5 w-6 shrink-0" fill="none" stroke="#1b1b1b" strokeWidth="1.500">
        <path d="M1 7h4.500l5-5v16l-5-5H1z" strokeLinejoin="round" />
        <path d="M13 7a4.500 4.500 0 0 1 0 6" />
        <path d="M16 4a8.500 8.500 0 0 1 0 12M19 1.200a12.500 12.500 0 0 1 0 17.600" stroke="#a9a9a9" />
      </svg>
      <svg viewBox="0 0 25 16" className="-mt-[2px] ml-3 h-4 w-[25px] shrink-0">
        <rect x=".9" y="1.200" width="19.500" height="13.600" rx="3" fill="none" stroke="#1b1b1b" strokeWidth="1.700" />
        <rect x="3.500" y="4" width="4.500" height="8" rx=".8" fill="#1b1b1b" />
        <path d="M21.300 5c2 0 3.200 1.300 3.200 3s-1.200 3-3.200 3z" fill="#1b1b1b" />
      </svg>
      <div className="-mt-[5px] w-[112px] whitespace-nowrap text-right">
        <p className="tracking-[-0.600px]">21:59</p>
        <p>26-12-2023</p>
      </div>
      <span className="-mt-[3px] ml-[11px] flex h-6 w-6 items-center justify-center rounded-full bg-[#0078d4] text-[16px] text-white">3</span>
    </footer>
  );
}

export default function App() {
  return (
    <div className="flex h-[1080px] w-[1920px] flex-col overflow-hidden bg-white font-['Open_Sans','Noto_Sans',sans-serif] text-[21px] text-black">
      <TabStrip />
      <Toolbar />
      <div className="flex h-[877px] overflow-hidden">
        <div className="w-[1895px]">
          <CourseHeader />
          <div className="flex">
            <Sidebar />
            <Goals />
          </div>
        </div>
        <Scrollbar />
      </div>
      <Taskbar />
    </div>
  );
}
